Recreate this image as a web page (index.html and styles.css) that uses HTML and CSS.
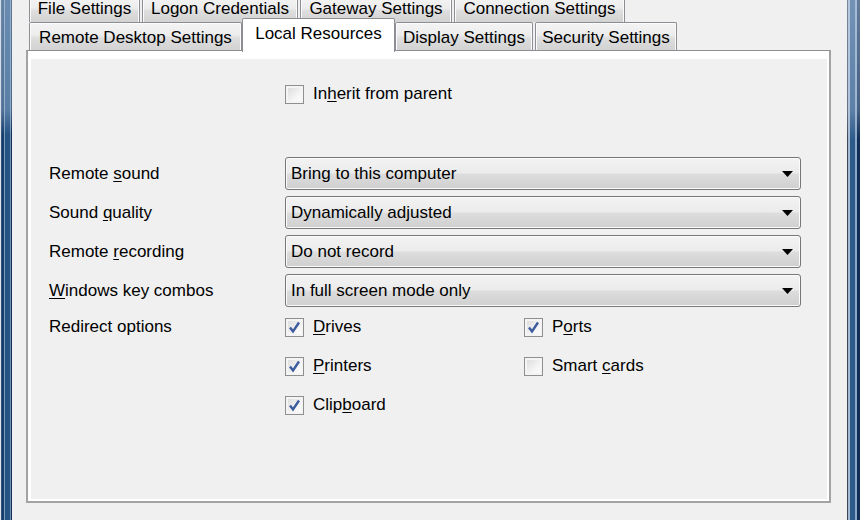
FILE: index.html
```html
<!DOCTYPE html>
<html>
<head>
<meta charset="utf-8">
<link rel="stylesheet" href="styles.css">
</head>
<body>
<div class="window">
  <div class="frame frame-left"></div>
  <div class="client">
    <div class="tabs">
      <div class="tab-row row1">
        <div class="tab w-file">File Settings</div>
        <div class="tab w-logon">Logon Credentials</div>
        <div class="tab w-gateway">Gateway Settings</div>
        <div class="tab w-conn">Connection Settings</div>
      </div>
      <div class="tab-row row2">
        <div class="tab w-rds">Remote Desktop Settings</div>
        <div class="tab tab-active w-local">Local Resources</div>
        <div class="tab w-display">Display Settings</div>
        <div class="tab w-security">Security Settings</div>
      </div>
    </div>
    <div class="panel">
      <div class="page">
        <div class="inherit">
          <label class="check"><span class="box"></span><span>In<u>h</u>erit from parent</span></label>
        </div>
        <div class="form">
          <div class="label">Remote <u>s</u>ound</div>
          <div class="select"><span>Bring to this computer</span><svg class="arrow" width="11" height="6" viewBox="0 0 11 6"><polygon points="0,0 11,0 5.5,6" fill="#000"/></svg></div>

          <div class="label">Sound <u>q</u>uality</div>
          <div class="select"><span>Dynamically adjusted</span><svg class="arrow" width="11" height="6" viewBox="0 0 11 6"><polygon points="0,0 11,0 5.5,6" fill="#000"/></svg></div>

          <div class="label">Remote <u>r</u>ecording</div>
          <div class="select"><span>Do not record</span><svg class="arrow" width="11" height="6" viewBox="0 0 11 6"><polygon points="0,0 11,0 5.5,6" fill="#000"/></svg></div>

          <div class="label"><u>W</u>indows key combos</div>
          <div class="select"><span>In full screen mode only</span><svg class="arrow" width="11" height="6" viewBox="0 0 11 6"><polygon points="0,0 11,0 5.5,6" fill="#000"/></svg></div>

          <div class="label label-top">Redirect options</div>
          <div class="redirects">
            <label class="check"><span class="box checked"><svg width="19" height="19" viewBox="0 0 19 19"><path d="M5 9.5 L8 13.5 L14 4.5" fill="none" stroke="#3d5c9e" stroke-width="2.4"/></svg></span><span><u>D</u>rives</span></label>
            <label class="check"><span class="box checked"><svg width="19" height="19" viewBox="0 0 19 19"><path d="M5 9.5 L8 13.5 L14 4.5" fill="none" stroke="#3d5c9e" stroke-width="2.4"/></svg></span><span>P<u>o</u>rts</span></label>
            <label class="check"><span class="box checked"><svg width="19" height="19" viewBox="0 0 19 19"><path d="M5 9.5 L8 13.5 L14 4.5" fill="none" stroke="#3d5c9e" stroke-width="2.4"/></svg></span><span><u>P</u>rinters</span></label>
            <label class="check"><span class="box"></span><span>Smart <u>c</u>ards</span></label>
            <label class="check"><span class="box checked"><svg width="19" height="19" viewBox="0 0 19 19"><path d="M5 9.5 L8 13.5 L14 4.5" fill="none" stroke="#3d5c9e" stroke-width="2.4"/></svg></span><span>Clip<u>b</u>oard</span></label>
          </div>
        </div>
      </div>
    </div>
  </div>
  <div class="frame frame-right"></div>
</div>
</body>
</html>
```
FILE: styles.css
```css
html, body {
  margin: 0;
  padding: 0;
}
body {
  width: 860px;
  height: 520px;
  overflow: hidden;
  background: #f0f0f0;
  font-family: "Liberation Sans", Arial, sans-serif;
  font-size: 17px;
  color: #000;
}
.window {
  display: flex;
  width: 860px;
  height: 520px;
}
.frame {
  flex: none;
  height: 520px;
}
.frame-left {
  width: 12px;
  background:
    linear-gradient(to bottom, rgba(190,210,230,0.45) 0, rgba(190,210,230,0.35) 110px, rgba(190,210,230,0) 135px),
    linear-gradient(to right, #dfe4ea 0 1px, #31517a 1px 2px, #163d6b 2px 4px, #7d9dbf 4px 5px, #245283 5px 10px, #7394b8 10px 11px, #0f2d55 11px 12px);
}
.frame-right {
  width: 13px;
  background:
    linear-gradient(to bottom, rgba(200,215,235,0.45) 0, rgba(200,215,235,0.3) 110px, rgba(200,215,235,0) 140px),
    linear-gradient(to right, #3b4656 0 1px, #a4bad2 1px 3px, #2d5a8a 3px 8px, #8aa6c6 8px 10px, #0f2d55 10px 13px);
}
.client {
  flex: 1;
  display: flex;
  flex-direction: column;
  padding-left: 14px;
}
.tabs {
  margin-top: -4px;
  padding-left: 3px;
  position: relative;
  z-index: 2;
}
.tab-row {
  display: flex;
  align-items: flex-end;
}
.row1 {
  height: 26px;
  gap: 2px;
}
.row2 {
  height: 28px;
}
.tab {
  box-sizing: border-box;
  height: 100%;
  border: 1px solid #8c8e94;
  border-bottom: none;
  border-radius: 2px 2px 0 0;
  background: linear-gradient(#f4f4f4, #ececec 45%, #dedede 55%, #d2d2d2);
  box-shadow: inset 1px 1px 0 #fbfbfb, inset -1px 0 0 #fbfbfb;
  display: flex;
  align-items: center;
  justify-content: center;
  white-space: nowrap;
}
.row1 .tab {
  padding-bottom: 1px;
}
.row2 .tab {
  height: 28px;
  padding-top: 3px;
}
.row2 .tab-active {
  height: 34px;
  margin-bottom: -2px;
  padding-top: 0;
  padding-bottom: 3px;
  background: #ffffff;
  box-shadow: none;
  border-color: #8c8e94;
}
.w-file { width: 111px; }
.w-logon { width: 156px; }
.w-gateway { width: 152px; }
.w-conn { width: 171px; }
.w-rds { width: 213px; }
.w-local { width: 153px; }
.w-display { width: 138px; margin-right: 2px; }
.w-security { width: 142px; }

.panel {
  box-sizing: border-box;
  width: 805px;
  height: 453px;
  border-style: solid;
  border-width: 1px 2px 2px 2px;
  border-color: #8c8e94 #a3a3a3 #a3a3a3 #a3a3a3;
  background: #ffffff;
  padding: 8px 2px 2px 3px;
  position: relative;
  z-index: 1;
}
.page {
  height: 100%;
  background: #f0f0f0;
  padding-left: 18px;
  padding-top: 25px;
  box-sizing: border-box;
}
.check {
  display: flex;
  align-items: center;
  height: 20px;
  line-height: 20px;
  white-space: nowrap;
}
.box {
  box-sizing: border-box;
  width: 19px;
  height: 19px;
  margin-right: 9px;
  border: 1px solid #8e8f8f;
  background: linear-gradient(135deg, #d8d8d8, #f4f4f4 60%, #ffffff);
  box-shadow: inset 0 0 0 2px #f4f4f4;
  flex: none;
  position: relative;
}
.box svg {
  position: absolute;
  left: -1px;
  top: -1px;
}
.inherit {
  padding-left: 236px;
}
.form {
  display: grid;
  grid-template-columns: 236px 516px;
  row-gap: 6px;
  margin-top: 53px;
}
.label {
  align-self: center;
  white-space: nowrap;
}
.label-top {
  align-self: start;
  margin-top: 4px;
  line-height: 20px;
}
.select {
  box-sizing: border-box;
  height: 33px;
  border: 1px solid #777;
  border-radius: 3px;
  background: linear-gradient(#f3f3f3, #ebebeb 48%, #dddddd 52%, #cfcfcf);
  box-shadow: inset 0 0 0 1px #fbfbfb;
  display: flex;
  align-items: center;
  justify-content: space-between;
  padding: 0 7px 0 5px;
}
.arrow {
  display: block;
}
.redirects {
  margin-top: 4px;
  display: grid;
  grid-template-columns: 239px auto;
  row-gap: 19px;
}
u {
  text-decoration: underline;
  text-underline-offset: 2px;
}
```
